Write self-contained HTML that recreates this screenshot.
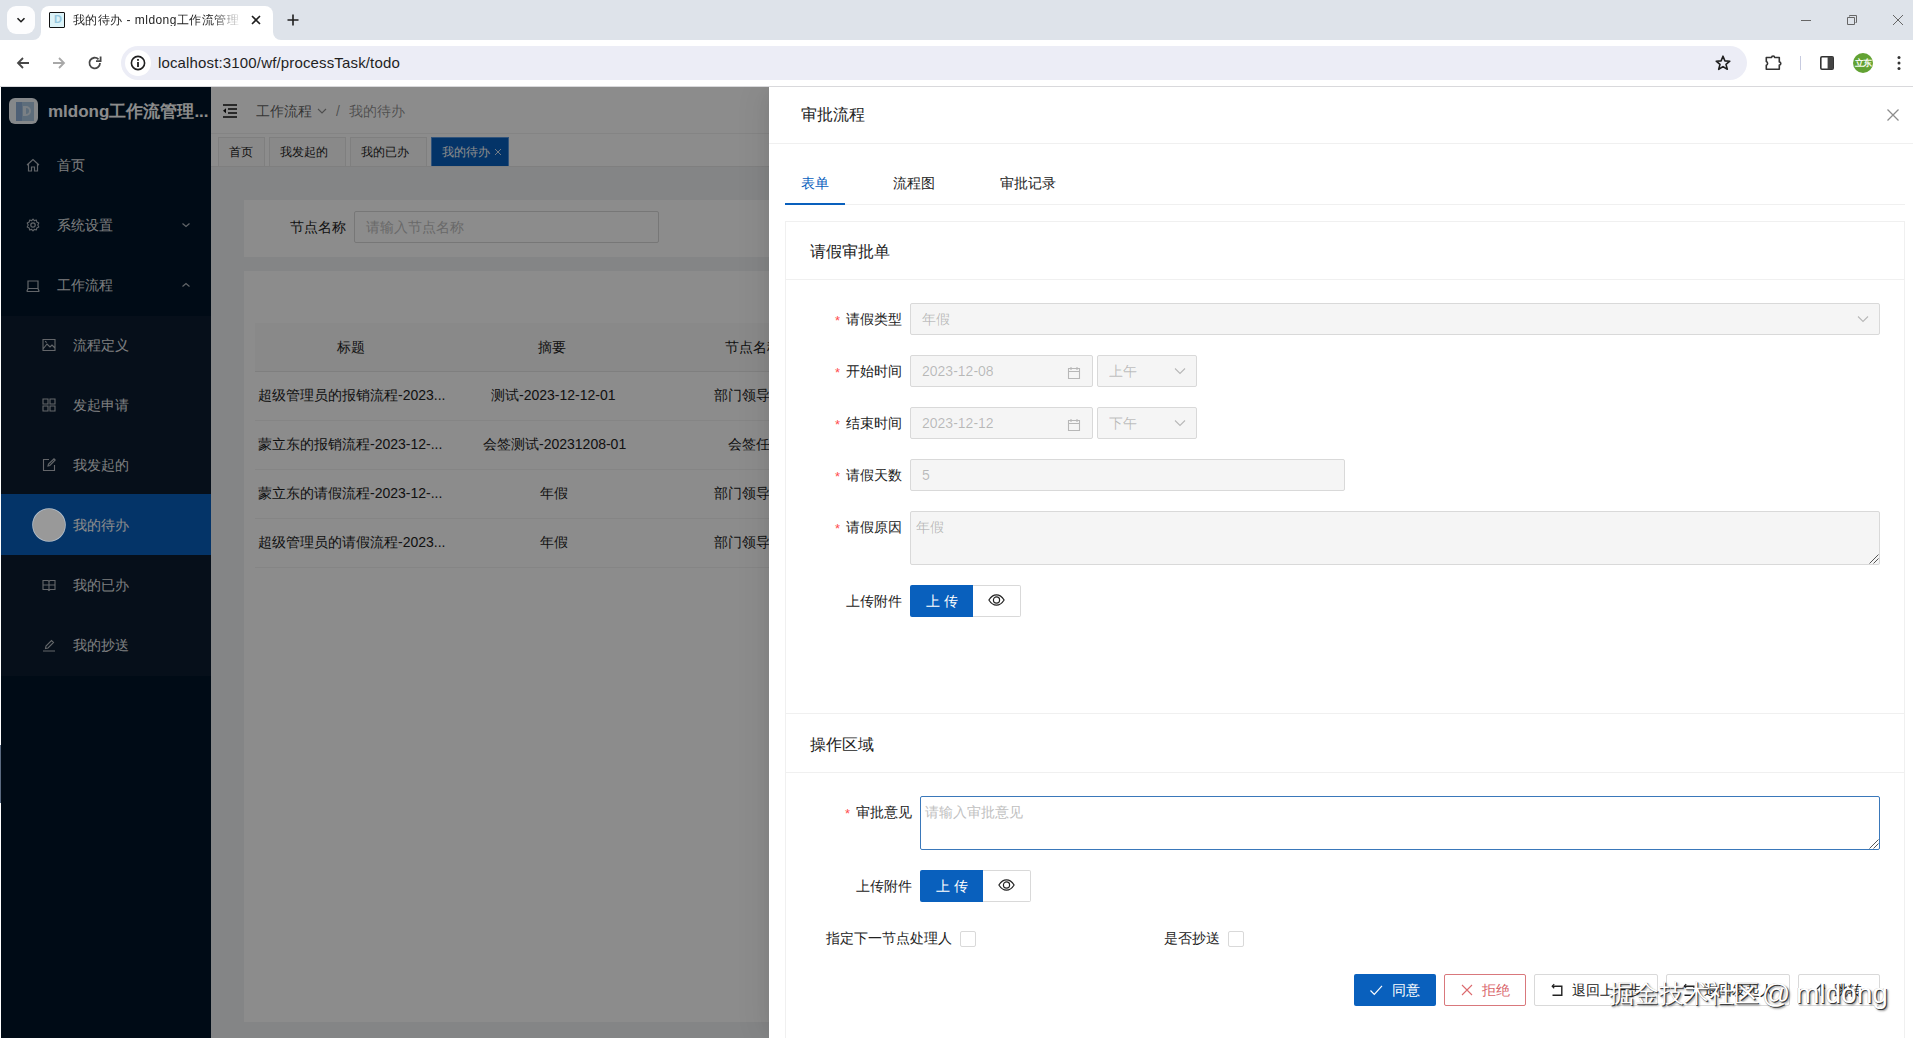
<!DOCTYPE html>
<html><head><meta charset="utf-8">
<style>
*{box-sizing:border-box;margin:0;padding:0}
html,body{width:1913px;height:1038px;overflow:hidden;font-family:"Liberation Sans",sans-serif;font-size:14px;color:#333;background:#fff;position:relative}
.a{position:absolute}
#chrome{position:absolute;left:0;top:0;width:1913px;height:87px;background:#fff}
#tabstrip{position:absolute;left:0;top:0;width:1913px;height:40px;background:#dee3ea}
.t{position:absolute;white-space:nowrap;line-height:1}
</style></head><body>
<div class="a" style="left:0px;top:87px;width:1913px;height:951px;background:#f0f2f5"></div>
<div class="a" style="left:1px;top:87px;width:210px;height:951px;background:#001529"></div>
<div class="a" style="left:9px;top:98px;width:29px;height:26px;background:#f2f8fc;border-radius:6px"></div>
<div class="a" style="left:16px;top:102px;width:18px;height:19px;background:#a9c6e0"></div>
<div class="a" style="left:16px;top:102px;width:6px;height:19px;background:#8fb0d8"></div>
<div class="a" style="left:23px;top:106px;width:3px;height:10px;background:#dfeaf2"></div>
<div class="a" style="left:25px;top:106px;width:6px;height:10px;border:2px solid #dfeaf2;border-left:0;border-radius:0 5px 5px 0"></div>
<div class="t" style="left:48px;top:103px;font-size:17px;color:#fff;font-weight:bold">mldong工作流管理...</div>
<div class="t" style="left:57px;top:158px;font-size:14px;color:rgba(255,255,255,.9);">首页</div>
<div class="t" style="left:57px;top:218px;font-size:14px;color:rgba(255,255,255,.9);">系统设置</div>
<div class="t" style="left:57px;top:278px;font-size:14px;color:rgba(255,255,255,.9);">工作流程</div>
<svg class="a" style="left:26px;top:158px" width="14" height="14" viewBox="0 0 14 14"><path d="M1 7L7 1.5L13 7M2.5 5.8V13H5.5V9H8.5V13H11.5V5.8" fill="none" stroke="rgba(255,255,255,.7)" stroke-width="1.2"/></svg>
<svg class="a" style="left:26px;top:218px" width="14" height="14" viewBox="0 0 14 14"><circle cx="7" cy="7" r="2.2" fill="none" stroke="rgba(255,255,255,.7)" stroke-width="1.2"/><path d="M7 1L8.3 2.6L10.4 2L10.8 4.1L12.8 5L11.8 7L12.8 9L10.8 9.9L10.4 12L8.3 11.4L7 13L5.7 11.4L3.6 12L3.2 9.9L1.2 9L2.2 7L1.2 5L3.2 4.1L3.6 2L5.7 2.6Z" fill="none" stroke="rgba(255,255,255,.7)" stroke-width="1.1" stroke-linejoin="round"/></svg>
<svg class="a" style="left:26px;top:279px" width="14" height="14" viewBox="0 0 14 14"><path d="M2 2H12V9.5H2Z M0.8 12.5H13.2 M2 9.5L0.8 12.5 M12 9.5L13.2 12.5" fill="none" stroke="rgba(255,255,255,.7)" stroke-width="1.2"/></svg>
<svg class="a" style="left:181px;top:221px" width="10" height="8" viewBox="0 0 10 8"><path d="M1.5 2.5L5 5.5L8.5 2.5" fill="none" stroke="rgba(255,255,255,.7)" stroke-width="1.2"/></svg>
<svg class="a" style="left:181px;top:281px" width="10" height="8" viewBox="0 0 10 8"><path d="M1.5 5.5L5 2.5L8.5 5.5" fill="none" stroke="rgba(255,255,255,.7)" stroke-width="1.2"/></svg>
<div class="a" style="left:1px;top:316px;width:210px;height:360px;background:#0c1d30"></div>
<div class="a" style="left:1px;top:494px;width:210px;height:61px;background:#0960bd"></div>
<div class="t" style="left:73px;top:338px;font-size:14px;color:rgba(255,255,255,.9);">流程定义</div>
<div class="t" style="left:73px;top:398px;font-size:14px;color:rgba(255,255,255,.9);">发起申请</div>
<div class="t" style="left:73px;top:458px;font-size:14px;color:rgba(255,255,255,.9);">我发起的</div>
<div class="t" style="left:73px;top:518px;font-size:14px;color:#fff;">我的待办</div>
<div class="t" style="left:73px;top:578px;font-size:14px;color:rgba(255,255,255,.9);">我的已办</div>
<div class="t" style="left:73px;top:638px;font-size:14px;color:rgba(255,255,255,.9);">我的抄送</div>
<svg class="a" style="left:42px;top:338px" width="14" height="14" viewBox="0 0 14 14"><path d="M1 1.5H13V12.5H1Z M1 11L5 6L8 9L10 7L13 10 M3.2 3.2L4.6 4.6" fill="none" stroke="rgba(255,255,255,.7)" stroke-width="1.1"/></svg>
<svg class="a" style="left:42px;top:398px" width="14" height="14" viewBox="0 0 14 14"><path d="M1 1H6V6H1Z M8 1H13V6H8Z M1 8H6V13H1Z M8 8H13V13H8Z" fill="none" stroke="rgba(255,255,255,.7)" stroke-width="1.1"/></svg>
<svg class="a" style="left:42px;top:458px" width="14" height="14" viewBox="0 0 14 14"><path d="M7 1.5H1.5V12.5H12.5V7 M6 8L6.5 6L12 0.8L13.2 2L7.8 7.5Z" fill="none" stroke="rgba(255,255,255,.7)" stroke-width="1.1"/></svg>
<svg class="a" style="left:42px;top:578px" width="14" height="14" viewBox="0 0 14 14"><path d="M1 2.5H6L7 3.5L8 2.5H13V11.5H8L7 12.5L6 11.5H1Z M7 3.5V12 M1 7H13" fill="none" stroke="rgba(255,255,255,.7)" stroke-width="1.1"/></svg>
<svg class="a" style="left:42px;top:638px" width="14" height="14" viewBox="0 0 14 14"><path d="M1 13H13 M3.5 10.5L4 8L9.5 2.5L11.5 4.5L6 10Z" fill="none" stroke="rgba(255,255,255,.7)" stroke-width="1.1"/></svg>
<div class="a" style="left:211px;top:87px;width:558px;height:46px;background:#fff"></div>
<div class="a" style="left:211px;top:133px;width:558px;height:1px;background:#f0f0f0"></div>
<svg class="a" style="left:222px;top:104px" width="16" height="14" viewBox="0 0 16 14"><path d="M1 1H15M6 5H15M6 9H15M1 13H15" stroke="#111" stroke-width="1.3"/><path d="M4 4.3L1 6.8L4 9.3Z" fill="#111"/></svg>
<div class="t" style="left:256px;top:104px;font-size:14px;color:rgba(0,0,0,.65);">工作流程</div>
<svg class="a" style="left:316px;top:106px" width="12" height="10" viewBox="0 0 12 10"><path d="M2 3L6 7L10 3" fill="none" stroke="rgba(0,0,0,.45)" stroke-width="1.1"/></svg>
<div class="t" style="left:336px;top:104px;font-size:14px;color:rgba(0,0,0,.45);">/</div>
<div class="t" style="left:349px;top:104px;font-size:14px;color:rgba(0,0,0,.45);">我的待办</div>
<div class="a" style="left:211px;top:134px;width:558px;height:32px;background:#fff"></div>
<div class="a" style="left:211px;top:166px;width:558px;height:1px;background:#e8e8e8"></div>
<div class="a" style="left:218px;top:137px;width:47px;height:29px;background:#fafafa;border:1px solid #e8e8e8;border-bottom:0"></div>
<div class="t" style="left:229px;top:146px;font-size:12px;color:#222;">首页</div>
<div class="a" style="left:269px;top:137px;width:77px;height:29px;background:#fafafa;border:1px solid #e8e8e8;border-bottom:0"></div>
<div class="t" style="left:280px;top:146px;font-size:12px;color:#222;">我发起的</div>
<div class="a" style="left:350px;top:137px;width:77px;height:29px;background:#fafafa;border:1px solid #e8e8e8;border-bottom:0"></div>
<div class="t" style="left:361px;top:146px;font-size:12px;color:#222;">我的已办</div>
<div class="a" style="left:431px;top:137px;width:78px;height:29px;background:#0960bd;border:1px solid #5b9ae0;border-bottom:0"></div>
<div class="t" style="left:442px;top:146px;font-size:12px;color:#fff;">我的待办</div>
<svg class="a" style="left:494px;top:148px" width="8" height="8" viewBox="0 0 8 8"><path d="M1 1L7 7M7 1L1 7" stroke="rgba(255,255,255,.8)" stroke-width="1"/></svg>
<div class="a" style="left:244px;top:200px;width:1669px;height:57px;background:#fff"></div>
<div class="t" style="left:290px;top:220px;font-size:14px;color:#222;">节点名称</div>
<div class="a" style="left:354px;top:211px;width:305px;height:32px;border:1px solid #d9d9d9;border-radius:2px;background:#fff"></div>
<div class="t" style="left:366px;top:220px;font-size:14px;color:#bfbfbf;">请输入节点名称</div>
<div class="a" style="left:244px;top:271px;width:1669px;height:751px;background:#fff"></div>
<div class="a" style="left:255px;top:323px;width:1658px;height:48px;background:#fafafa"></div>
<div class="a" style="left:255px;top:371px;width:1658px;height:1px;background:#e8e8e8"></div>
<div class="t" style="left:337px;top:340px;font-size:14px;color:#222;">标题</div>
<div class="t" style="left:538px;top:340px;font-size:14px;color:#222;">摘要</div>
<div class="t" style="left:725px;top:340px;font-size:14px;color:#222;">节点名称</div>
<div class="t" style="left:258px;top:388px;font-size:14px;color:#222;">超级管理员的报销流程-2023...</div>
<div class="t" style="left:491px;top:388px;font-size:14px;color:#222;">测试-2023-12-12-01</div>
<div class="t" style="left:714px;top:388px;font-size:14px;color:#222;">部门领导</div>
<div class="a" style="left:255px;top:420px;width:1658px;height:1px;background:#f2f2f2"></div>
<div class="t" style="left:258px;top:437px;font-size:14px;color:#222;">蒙立东的报销流程-2023-12-...</div>
<div class="t" style="left:483px;top:437px;font-size:14px;color:#222;">会签测试-20231208-01</div>
<div class="t" style="left:728px;top:437px;font-size:14px;color:#222;">会签任务</div>
<div class="a" style="left:255px;top:469px;width:1658px;height:1px;background:#f2f2f2"></div>
<div class="t" style="left:258px;top:486px;font-size:14px;color:#222;">蒙立东的请假流程-2023-12-...</div>
<div class="t" style="left:540px;top:486px;font-size:14px;color:#222;">年假</div>
<div class="t" style="left:714px;top:486px;font-size:14px;color:#222;">部门领导</div>
<div class="a" style="left:255px;top:518px;width:1658px;height:1px;background:#f2f2f2"></div>
<div class="t" style="left:258px;top:535px;font-size:14px;color:#222;">超级管理员的请假流程-2023...</div>
<div class="t" style="left:540px;top:535px;font-size:14px;color:#222;">年假</div>
<div class="t" style="left:714px;top:535px;font-size:14px;color:#222;">部门领导</div>
<div class="a" style="left:255px;top:567px;width:1658px;height:1px;background:#f2f2f2"></div>
<div class="a" style="left:0px;top:87px;width:769px;height:951px;background:rgba(0,0,0,.45)"></div>
<div class="a" style="left:0px;top:87px;width:1px;height:951px;background:#fff"></div>
<div class="a" style="left:0px;top:745px;width:1px;height:58px;background:#5a6a80"></div>
<div class="a" style="left:33px;top:509px;width:32px;height:32px;background:#999;border-radius:50%;box-shadow:0 0 0 .8px #b5c0cc"></div>
<div class="a" style="left:769px;top:87px;width:1144px;height:951px;background:#fff;box-shadow:-6px 0 16px -8px rgba(0,0,0,.08),-9px 0 28px 0 rgba(0,0,0,.05)"></div>
<div class="a" style="left:769px;top:143px;width:1144px;height:1px;background:#f0f0f0"></div>
<div class="t" style="left:801px;top:107px;font-size:16px;color:#222;">审批流程</div>
<svg class="a" style="left:1886px;top:108px" width="14" height="14" viewBox="0 0 14 14"><path d="M1.5 1.5L12.5 12.5M12.5 1.5L1.5 12.5" stroke="rgba(0,0,0,.45)" stroke-width="1.3"/></svg>
<div class="t" style="left:801px;top:176px;font-size:14px;color:#0960bd;">表单</div>
<div class="t" style="left:893px;top:176px;font-size:14px;color:#222;">流程图</div>
<div class="t" style="left:1000px;top:176px;font-size:14px;color:#222;">审批记录</div>
<div class="a" style="left:785px;top:204px;width:1120px;height:1px;background:#f0f0f0"></div>
<div class="a" style="left:785px;top:203px;width:60px;height:2px;background:#0960bd"></div>
<div class="a" style="left:785px;top:221px;width:1120px;height:493px;border:1px solid #f0f0f0;background:#fff"></div>
<div class="a" style="left:786px;top:279px;width:1118px;height:1px;background:#f0f0f0"></div>
<div class="t" style="left:810px;top:244px;font-size:16px;color:#222;">请假审批单</div>
<div class="t" style="left:846px;top:312px;font-size:14px;color:#222;">请假类型</div>
<div class="t" style="left:835px;top:314px;font-size:13px;color:#ff4d4f;font-family:"Liberation Mono",monospace">*</div>
<div class="a" style="left:910px;top:303px;width:970px;height:32px;background:#f5f5f5;border:1px solid #d9d9d9;border-radius:2px"></div>
<div class="t" style="left:922px;top:312px;font-size:14px;color:rgba(0,0,0,.25);">年假</div>
<svg class="a" style="left:1857px;top:313px" width="12" height="12" viewBox="0 0 12 12"><path d="M1 3.5L6 8.5L11 3.5" fill="none" stroke="rgba(0,0,0,.25)" stroke-width="1.1"/></svg>
<div class="t" style="left:846px;top:364px;font-size:14px;color:#222;">开始时间</div>
<div class="t" style="left:835px;top:366px;font-size:13px;color:#ff4d4f;font-family:"Liberation Mono",monospace">*</div>
<div class="a" style="left:910px;top:355px;width:183px;height:32px;background:#f5f5f5;border:1px solid #d9d9d9;border-radius:2px"></div>
<div class="t" style="left:922px;top:364px;font-size:14px;color:rgba(0,0,0,.25);">2023-12-08</div>
<svg class="a" style="left:1067px;top:366px" width="14" height="14" viewBox="0 0 14 14"><path d="M1.5 2.5H12.5V12.5H1.5Z M1.5 5.5H12.5 M4 1V4 M10 1V4" fill="none" stroke="rgba(0,0,0,.25)" stroke-width="1.1"/></svg>
<div class="a" style="left:1097px;top:355px;width:100px;height:32px;background:#f5f5f5;border:1px solid #d9d9d9;border-radius:2px"></div>
<div class="t" style="left:1109px;top:364px;font-size:14px;color:rgba(0,0,0,.25);">上午</div>
<svg class="a" style="left:1174px;top:365px" width="12" height="12" viewBox="0 0 12 12"><path d="M1 3.5L6 8.5L11 3.5" fill="none" stroke="rgba(0,0,0,.25)" stroke-width="1.1"/></svg>
<div class="t" style="left:846px;top:416px;font-size:14px;color:#222;">结束时间</div>
<div class="t" style="left:835px;top:418px;font-size:13px;color:#ff4d4f;font-family:"Liberation Mono",monospace">*</div>
<div class="a" style="left:910px;top:407px;width:183px;height:32px;background:#f5f5f5;border:1px solid #d9d9d9;border-radius:2px"></div>
<div class="t" style="left:922px;top:416px;font-size:14px;color:rgba(0,0,0,.25);">2023-12-12</div>
<svg class="a" style="left:1067px;top:418px" width="14" height="14" viewBox="0 0 14 14"><path d="M1.5 2.5H12.5V12.5H1.5Z M1.5 5.5H12.5 M4 1V4 M10 1V4" fill="none" stroke="rgba(0,0,0,.25)" stroke-width="1.1"/></svg>
<div class="a" style="left:1097px;top:407px;width:100px;height:32px;background:#f5f5f5;border:1px solid #d9d9d9;border-radius:2px"></div>
<div class="t" style="left:1109px;top:416px;font-size:14px;color:rgba(0,0,0,.25);">下午</div>
<svg class="a" style="left:1174px;top:417px" width="12" height="12" viewBox="0 0 12 12"><path d="M1 3.5L6 8.5L11 3.5" fill="none" stroke="rgba(0,0,0,.25)" stroke-width="1.1"/></svg>
<div class="t" style="left:846px;top:468px;font-size:14px;color:#222;">请假天数</div>
<div class="t" style="left:835px;top:470px;font-size:13px;color:#ff4d4f;font-family:"Liberation Mono",monospace">*</div>
<div class="a" style="left:910px;top:459px;width:435px;height:32px;background:#f5f5f5;border:1px solid #d9d9d9;border-radius:2px"></div>
<div class="t" style="left:922px;top:468px;font-size:14px;color:rgba(0,0,0,.25);">5</div>
<div class="t" style="left:846px;top:520px;font-size:14px;color:#222;">请假原因</div>
<div class="t" style="left:835px;top:522px;font-size:13px;color:#ff4d4f;font-family:"Liberation Mono",monospace">*</div>
<div class="a" style="left:910px;top:511px;width:970px;height:54px;background:#f5f5f5;border:1px solid #d9d9d9;border-radius:2px"></div>
<div class="t" style="left:916px;top:520px;font-size:14px;color:rgba(0,0,0,.25);">年假</div>
<svg class="a" style="left:1869px;top:554px" width="10" height="10" viewBox="0 0 10 10"><path d="M9.5 0.5L0.5 9.5M9.5 4.5L4.5 9.5" stroke="#444" stroke-width="0.9"/></svg>
<div class="t" style="left:846px;top:594px;font-size:14px;color:#222;">上传附件</div>
<div class="a" style="left:910px;top:585px;width:63px;height:32px;background:#0960bd;border-radius:2px 0 0 2px"></div>
<div class="t" style="left:926px;top:594px;font-size:14px;color:#fff;letter-spacing:0px">上&nbsp;传</div>
<div class="a" style="left:973px;top:585px;width:48px;height:32px;background:#fff;border:1px solid #d9d9d9;border-left:0;border-radius:0 2px 2px 0"></div>
<svg class="a" style="left:988px;top:594px" width="17" height="12" viewBox="0 0 17 12"><path d="M0.9 6C3 2.6 5.5 0.8 8.5 0.8C11.5 0.8 14 2.6 16.1 6C14 9.4 11.5 11.2 8.5 11.2C5.5 11.2 3 9.4 0.9 6Z" fill="none" stroke="#222" stroke-width="1.2"/><circle cx="8.5" cy="6" r="3.1" fill="none" stroke="#222" stroke-width="1.2"/></svg>
<div class="a" style="left:785px;top:713px;width:1120px;height:327px;border:1px solid #f0f0f0;background:#fff"></div>
<div class="a" style="left:786px;top:772px;width:1118px;height:1px;background:#f0f0f0"></div>
<div class="t" style="left:810px;top:737px;font-size:16px;color:#222;">操作区域</div>
<div class="t" style="left:856px;top:805px;font-size:14px;color:#222;">审批意见</div>
<div class="t" style="left:845px;top:807px;font-size:13px;color:#ff4d4f;font-family:"Liberation Mono",monospace">*</div>
<div class="a" style="left:920px;top:796px;width:960px;height:54px;border:1px solid #3a78ba;border-radius:2px;background:#fff"></div>
<div class="t" style="left:925px;top:805px;font-size:14px;color:#bfbfbf;">请输入审批意见</div>
<svg class="a" style="left:1869px;top:839px" width="10" height="10" viewBox="0 0 10 10"><path d="M9.5 0.5L0.5 9.5M9.5 4.5L4.5 9.5" stroke="#444" stroke-width="0.9"/></svg>
<div class="t" style="left:856px;top:879px;font-size:14px;color:#222;">上传附件</div>
<div class="a" style="left:920px;top:870px;width:63px;height:32px;background:#0960bd;border-radius:2px 0 0 2px"></div>
<div class="t" style="left:936px;top:879px;font-size:14px;color:#fff;letter-spacing:0px">上&nbsp;传</div>
<div class="a" style="left:983px;top:870px;width:48px;height:32px;background:#fff;border:1px solid #d9d9d9;border-left:0;border-radius:0 2px 2px 0"></div>
<svg class="a" style="left:998px;top:879px" width="17" height="12" viewBox="0 0 17 12"><path d="M0.9 6C3 2.6 5.5 0.8 8.5 0.8C11.5 0.8 14 2.6 16.1 6C14 9.4 11.5 11.2 8.5 11.2C5.5 11.2 3 9.4 0.9 6Z" fill="none" stroke="#222" stroke-width="1.2"/><circle cx="8.5" cy="6" r="3.1" fill="none" stroke="#222" stroke-width="1.2"/></svg>
<div class="t" style="left:826px;top:931px;font-size:14px;color:#222;">指定下一节点处理人</div>
<div class="a" style="left:960px;top:931px;width:16px;height:16px;border:1px solid #d9d9d9;border-radius:2px"></div>
<div class="t" style="left:1164px;top:931px;font-size:14px;color:#222;">是否抄送</div>
<div class="a" style="left:1228px;top:931px;width:16px;height:16px;border:1px solid #d9d9d9;border-radius:2px"></div>
<div class="a" style="left:1354px;top:974px;width:82px;height:32px;background:#0960bd;border-radius:2px"></div>
<svg class="a" style="left:1369px;top:983px" width="14" height="14" viewBox="0 0 14 14"><path d="M1.5 7.5L5.3 11.3L13 2.8" fill="none" stroke="#fff" stroke-width="1.2"/></svg>
<div class="t" style="left:1392px;top:983px;font-size:14px;color:#fff;">同意</div>
<div class="a" style="left:1444px;top:974px;width:82px;height:32px;border:1px solid #d9787c;border-radius:2px"></div>
<svg class="a" style="left:1459px;top:983px" width="14" height="14" viewBox="0 0 14 14"><path d="M3 2L13 12M13 2L3 12" fill="none" stroke="#dc6a6e" stroke-width="1.1"/></svg>
<div class="t" style="left:1482px;top:983px;font-size:14px;color:#d9646a;">拒绝</div>
<div class="a" style="left:1534px;top:974px;width:124px;height:32px;border:1px solid #d9d9d9;border-radius:2px"></div>
<svg class="a" style="left:1550px;top:983px" width="14" height="14" viewBox="0 0 14 14"><path d="M2.5 3.3H11.8V12.3H2.5" fill="none" stroke="#222" stroke-width="1.4"/><path d="M4.2 1.2L2.2 3.3L4.2 5.2" fill="none" stroke="#222" stroke-width="1.2"/></svg>
<div class="t" style="left:1572px;top:983px;font-size:14px;color:#222;">退回上一步</div>
<div class="a" style="left:1666px;top:974px;width:124px;height:32px;border:1px solid #d9d9d9;border-radius:2px"></div>
<svg class="a" style="left:1682px;top:983px" width="14" height="14" viewBox="0 0 14 14"><path d="M2.5 3.3H11.8V12.3H2.5" fill="none" stroke="#222" stroke-width="1.4"/><path d="M4.2 1.2L2.2 3.3L4.2 5.2" fill="none" stroke="#222" stroke-width="1.2"/></svg>
<div class="t" style="left:1704px;top:983px;font-size:14px;color:#222;">退回发起人</div>
<div class="a" style="left:1798px;top:974px;width:82px;height:32px;border:1px solid #d9d9d9;border-radius:2px"></div>
<svg class="a" style="left:1814px;top:983px" width="14" height="14" viewBox="0 0 14 14"><path d="M7 13V2 M3 6L7 2L11 6" fill="none" stroke="#333" stroke-width="1.3"/></svg>
<div class="t" style="left:1834px;top:983px;font-size:14px;color:#222;">跳转</div>
<div class="t" style="left:1609px;top:982px;font-size:24.5px;color:#fff;text-shadow:1px 1px 0 rgba(40,40,40,.9),2px 2px 2px rgba(0,0,0,.4),-0.5px -0.5px 0 rgba(0,0,0,.25)">掘金技术社区</div>
<div class="t" style="left:1762px;top:980px;font-size:28px;color:#fff;text-shadow:1px 1px 0 rgba(40,40,40,.9),2px 2px 2px rgba(0,0,0,.4),-0.5px -0.5px 0 rgba(0,0,0,.25)">@</div>
<div class="t" style="left:1796px;top:980px;font-size:28px;color:#fff;text-shadow:1px 1px 0 rgba(40,40,40,.9),2px 2px 2px rgba(0,0,0,.4),-0.5px -0.5px 0 rgba(0,0,0,.25)">mldong</div>

<div id="chrome">
  <div id="tabstrip"></div>
  <div class="a" style="left:7px;top:6px;width:28px;height:28px;border-radius:9px;background:#fdfdfe"></div>
  <svg class="a" style="left:14px;top:13px" width="14" height="14" viewBox="0 0 14 14"><path d="M3.5 5.2 L7 8.7 L10.5 5.2" fill="none" stroke="#1f1f1f" stroke-width="1.6"/></svg>
  <div class="a" style="left:41px;top:6px;width:232px;height:40px;background:#fff;border-radius:8px 8px 0 0"></div>
  <div class="a" style="left:33px;top:32px;width:8px;height:8px;background:#fff"></div>
  <div class="a" style="left:33px;top:32px;width:8px;height:8px;background:#dee3ea;border-bottom-right-radius:8px"></div>
  <div class="a" style="left:273px;top:32px;width:8px;height:8px;background:#fff"></div>
  <div class="a" style="left:273px;top:32px;width:8px;height:8px;background:#dee3ea;border-bottom-left-radius:8px"></div>
  <div class="a" style="left:49px;top:12px;width:16px;height:16px;border:1.6px solid #111;background:#dcf3f8;border-radius:1px"></div>
  <div class="t" style="left:54px;top:14px;font-size:11px;color:#95c6de;font-weight:bold">D</div>
  <div class="t" style="left:73px;top:14px;font-size:12px;color:#1f1f1f;width:170px;overflow:hidden;letter-spacing:0.45px;-webkit-mask-image:linear-gradient(90deg,#000 82%,transparent)">我的待办 - mldong工作流管理</div>
  <svg class="a" style="left:250px;top:14px" width="12" height="12" viewBox="0 0 12 12"><path d="M2 2L10 10M10 2L2 10" stroke="#1f1f1f" stroke-width="1.6"/></svg>
  <svg class="a" style="left:286px;top:13px" width="14" height="14" viewBox="0 0 14 14"><path d="M7 1.5V12.5M1.5 7H12.5" stroke="#1f1f1f" stroke-width="1.6"/></svg>
  <svg class="a" style="left:1800px;top:14px" width="12" height="12" viewBox="0 0 12 12"><path d="M1 6.5H11" stroke="#666" stroke-width="1"/></svg>
  <svg class="a" style="left:1846px;top:14px" width="12" height="12" viewBox="0 0 12 12"><path d="M3.5 2.5V1.5H10.5V8.5H9.5M1.5 3.5H8.5V10.5H1.5Z" fill="none" stroke="#666" stroke-width="1"/></svg>
  <svg class="a" style="left:1892px;top:14px" width="12" height="12" viewBox="0 0 12 12"><path d="M1 1L11 11M11 1L1 11" stroke="#666" stroke-width="1"/></svg>
  <svg class="a" style="left:15px;top:55px" width="16" height="16" viewBox="0 0 16 16"><path d="M14 8H3M8 3L3 8L8 13" fill="none" stroke="#474747" stroke-width="1.8"/></svg>
  <svg class="a" style="left:51px;top:55px" width="16" height="16" viewBox="0 0 16 16"><path d="M2 8H13M8 3L13 8L8 13" fill="none" stroke="#a8a8a8" stroke-width="1.8"/></svg>
  <svg class="a" style="left:87px;top:55px" width="16" height="16" viewBox="0 0 16 16"><path d="M13 8A5.3 5.3 0 1 1 11.5 4.3" fill="none" stroke="#474747" stroke-width="1.8"/><path d="M13.6 1.6V6.2H9" fill="none" stroke="#474747" stroke-width="1.8"/></svg>
  <div class="a" style="left:121px;top:46px;width:1626px;height:34px;border-radius:17px;background:#ecedf6"></div>
  <div class="a" style="left:125px;top:50px;width:26px;height:26px;border-radius:13px;background:#fff"></div>
  <svg class="a" style="left:130px;top:55px" width="16" height="16" viewBox="0 0 16 16"><circle cx="8" cy="8" r="6.6" fill="none" stroke="#1f1f1f" stroke-width="1.6"/><rect x="7.1" y="7" width="1.8" height="5" fill="#1f1f1f"/><rect x="7.1" y="4" width="1.8" height="1.8" fill="#1f1f1f"/></svg>
  <div class="t" style="left:158px;top:55px;font-size:15px;color:#1f1f1f;letter-spacing:0.15px">localhost:3100/wf/processTask/todo</div>
  <svg class="a" style="left:1714px;top:54px" width="18" height="18" viewBox="0 0 18 18"><path d="M9 2.2L10.9 6.9L15.8 7.2L12 10.4L13.3 15.3L9 12.6L4.7 15.3L6 10.4L2.2 7.2L7.1 6.9Z" fill="none" stroke="#1f1f1f" stroke-width="1.6" stroke-linejoin="round"/></svg>
  <svg class="a" style="left:1764px;top:53px" width="18" height="18" viewBox="0 0 18 18"><path d="M2.3 4.5H7.6A1.5 1.5 0 0 1 10.6 4.5H15.3V9A1.5 1.5 0 0 1 15.3 12V16.3H2.3V12.2A1.9 1.9 0 0 0 2.3 8.6Z" fill="none" stroke="#333" stroke-width="1.6" stroke-linejoin="round"/></svg>
  <div class="a" style="left:1800px;top:56px;width:1px;height:14px;background:#c7cbe0"></div>
  <svg class="a" style="left:1819px;top:55px" width="16" height="16" viewBox="0 0 16 16"><rect x="1.8" y="1.8" width="12.4" height="12.4" rx="1.2" fill="none" stroke="#333" stroke-width="1.6"/><rect x="8.6" y="1.8" width="5.6" height="12.4" fill="#444"/></svg>
  <div class="a" style="left:1853px;top:53px;width:20px;height:20px;border-radius:10px;background:#62a233;color:#f4faef;font-size:9px;line-height:20px;text-align:center;white-space:nowrap;letter-spacing:-0.8px;font-weight:bold">立东</div>
  <svg class="a" style="left:1891px;top:55px" width="16" height="16" viewBox="0 0 16 16"><circle cx="8" cy="2.5" r="1.5" fill="#333"/><circle cx="8" cy="8" r="1.5" fill="#333"/><circle cx="8" cy="13.5" r="1.5" fill="#333"/></svg>
  <div class="a" style="left:0;top:86px;width:1913px;height:1px;background:#d9d9dc"></div>
</div>

</body></html>
